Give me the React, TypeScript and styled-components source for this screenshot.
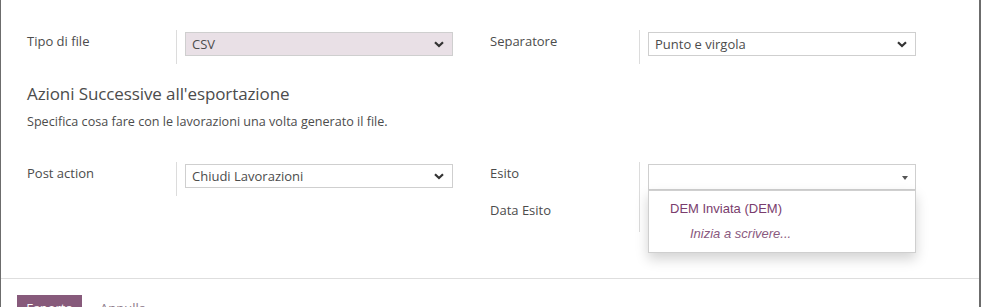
import React from 'react'
import styled, { createGlobalStyle } from 'styled-components'

const GlobalStyle = createGlobalStyle`
    html, body {
        margin: 0;
        padding: 0;
        background: #6c6c6c;
        font-family: "Open Sans", "Liberation Sans", sans-serif;
        font-size: 13px;
        color: #4c4c4c;
    }
    * { box-sizing: border-box; }
`;

const Chevron: React.FC = () => (
    <svg width="10" height="7" viewBox="0 0 10 7">
        <path d="M1 1.2 L5 5 L9 1.2" fill="none" stroke="#333" strokeWidth="2.2" />
    </svg>
)

export default function App() {
  return (
    <Backdrop>
        <GlobalStyle />
        <Modal>
            <Body>
                <Columns>
                    <Group>
                        <Row>
                            <Label>Tipo di file</Label>
                            <Cell>
                                <Select tinted>
                                    <span>CSV</span>
                                    <Chevron />
                                </Select>
                            </Cell>
                        </Row>
                    </Group>
                    <Group>
                        <Row>
                            <Label>Separatore</Label>
                            <Cell>
                                <Select>
                                    <span>Punto e virgola</span>
                                    <Chevron />
                                </Select>
                            </Cell>
                        </Row>
                    </Group>
                </Columns>

                <Heading>Azioni Successive all'esportazione</Heading>
                <Hint>Specifica cosa fare con le lavorazioni una volta generato il file.</Hint>

                <Columns second>
                    <Group>
                        <Row>
                            <Label>Post action</Label>
                            <Cell>
                                <Select>
                                    <span>Chiudi Lavorazioni</span>
                                    <Chevron />
                                </Select>
                            </Cell>
                        </Row>
                    </Group>
                    <Group>
                        <Row>
                            <Label>Esito</Label>
                            <Cell>
                                <Autocomplete>
                                    <Input>
                                        <Caret />
                                    </Input>
                                    <Dropdown>
                                        <Option>DEM Inviata (DEM)</Option>
                                        <Option muted>Inizia a scrivere...</Option>
                                    </Dropdown>
                                </Autocomplete>
                            </Cell>
                        </Row>
                        <Row>
                            <Label lower>Data Esito</Label>
                            <Cell>
                                <DateInput />
                            </Cell>
                        </Row>
                    </Group>
                </Columns>
            </Body>
            <Footer>
                <Primary>Esporta</Primary>
                <LinkButton>Annulla</LinkButton>
            </Footer>
        </Modal>
    </Backdrop>
  )
}

const Backdrop = styled.div`
    height: 307px;
    overflow: hidden;
    padding: 0 2px 0 1px;
`;

const Modal = styled.div`
    background: #fff;
    height: 340px;
`;

const Body = styled.div`
    padding: 30px 26px 46px 26px;
`;

const Columns = styled.div<{second?: boolean}>`
    display: grid;
    grid-template-columns: 463px 463px;
    align-items: start;
    margin-top: ${props => props.second ? '30px' : '0'};
`;

const Group = styled.div`
    display: flex;
    flex-direction: column;
`;

const Row = styled.div`
    display: grid;
    grid-template-columns: 149px 276px;
`;

const Label = styled.div<{lower?: boolean}>`
    line-height: 20px;
    padding-top: ${props => props.lower ? '2px' : '1px'};
    color: #4c4c4c;
`;

const Cell = styled.div`
    border-left: 1px solid #dcdcdc;
    padding: 2px 0 8px 8px;
`;

const Select = styled.div<{tinted?: boolean}>`
    height: 24px;
    width: 268px;
    border: 1px solid #cfcfcf;
    background: ${props => props.tinted ? '#e9e0e6' : '#fff'};
    display: flex;
    align-items: center;
    justify-content: space-between;
    padding: 0 8px 0 6px;
    color: #4c4c4c;
    line-height: 1;
`;

const Autocomplete = styled.div`
    position: relative;
    width: 268px;
`;

const Input = styled.div`
    height: 26px;
    border: 1px solid #cfcfcf;
    background: #fff;
    position: relative;
`;

const Caret = styled.span`
    position: absolute;
    right: 7px;
    top: 11px;
    width: 0;
    height: 0;
    border-left: 3.5px solid transparent;
    border-right: 3.5px solid transparent;
    border-top: 4px solid #555;
`;

const Dropdown = styled.ul`
    position: absolute;
    top: 26px;
    left: 0;
    width: 268px;
    margin: 0;
    padding: 7px 0 4px;
    list-style: none;
    background: #fff;
    border: 1px solid #cfcfcf;
    box-shadow: 0 6px 12px rgba(0, 0, 0, .175);
    z-index: 10;
    font-family: "Liberation Sans", Arial, sans-serif;
    font-size: 13px;
`;

const Option = styled.li<{muted?: boolean}>`
    line-height: 20px;
    padding: 1px 0 4px ${props => props.muted ? '41px' : '21px'};
    color: ${props => props.muted ? '#8a5a7e' : '#7a3d6d'};
    font-style: ${props => props.muted ? 'italic' : 'normal'};
`;

const DateInput = styled.div`
    height: 24px;
    width: 268px;
    border-bottom: 1px solid #cfcfcf;
`;

const Heading = styled.h3`
    margin: 20px 0 0;
    font-size: 17px;
    font-weight: 400;
    line-height: 20px;
    letter-spacing: -0.1px;
    color: #4c4c4c;
`;

const Hint = styled.p`
    margin: 8px 0 0;
    font-size: 12.6px;
    line-height: 20px;
    color: #4c4c4c;
`;

const Footer = styled.div`
    border-top: 1px solid #dedede;
    padding: 16px 16px;
    display: flex;
    align-items: flex-start;
    gap: 18px;
`;

const Primary = styled.button`
    background: #875a7b;
    color: #fff;
    border: none;
    width: 65px;
    padding: 3px 0;
    line-height: 20px;
    font-family: inherit;
    font-size: 13px;
`;

const LinkButton = styled.button`
    background: none;
    border: none;
    color: #8c7a8a;
    padding: 3px 0;
    line-height: 20px;
    font-family: inherit;
    font-size: 13px;
`;
